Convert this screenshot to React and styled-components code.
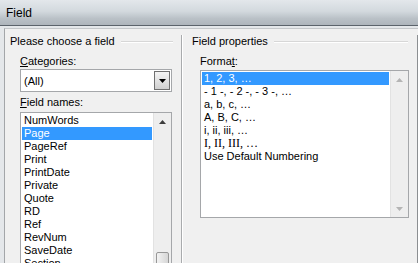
import React from 'react'
import styled, { createGlobalStyle } from 'styled-components'

const fieldNames = [
  'NumWords',
  'Page',
  'PageRef',
  'Print',
  'PrintDate',
  'Private',
  'Quote',
  'RD',
  'Ref',
  'RevNum',
  'SaveDate',
  'Section',
]

const formats = [
  { label: '1, 2, 3, …' },
  { label: '- 1 -, - 2 -, - 3 -, …' },
  { label: 'a, b, c, …' },
  { label: 'A, B, C, …' },
  { label: 'i, ii, iii, …' },
  { label: 'I, II, III, …', serif: true },
  { label: 'Use Default Numbering' },
]

const Arrow = ({ down, color }) => (
  <svg width='7' height='4' viewBox='0 0 7 4'>
    {down ? (
      <path d='M0 0 H7 L3.5 4 Z' fill={color} />
    ) : (
      <path d='M0 4 H7 L3.5 0 Z' fill={color} />
    )}
  </svg>
)

const App = () => {
  return (
    <>
      <GlobalStyle />
      <Window>
        <TitleBar>Field</TitleBar>
        <Frame>
          <Client>
            <LeftPane>
              <GroupHeader>Please choose a field</GroupHeader>
              <Fields>
                <Label>
                  <u>C</u>ategories:
                </Label>
                <Combo>
                  <ComboText>(All)</ComboText>
                  <DropButton>
                    <Arrow down color='#000' />
                  </DropButton>
                </Combo>
                <Label $gap>
                  <u>F</u>ield names:
                </Label>
                <ListBox $height={170}>
                  <Items>
                    {fieldNames.map((name) => (
                      <Item key={name} $selected={name === 'Page'}>
                        {name}
                      </Item>
                    ))}
                  </Items>
                  <ScrollBar>
                    <ArrowButton>
                      <Arrow color='#3c3c3c' />
                    </ArrowButton>
                    <Thumb style={{ marginTop: 122 }} />
                  </ScrollBar>
                </ListBox>
              </Fields>
            </LeftPane>
            <RightPane>
              <GroupHeader $right>Field properties</GroupHeader>
              <Fields $right>
                <Label>
                  Forma<u>t</u>:
                </Label>
                <ListBox $height={148} $wide>
                  <Items>
                    {formats.map((f, i) => (
                      <Item key={f.label} $selected={i === 0} $serif={f.serif}>
                        {f.label}
                      </Item>
                    ))}
                  </Items>
                  <ScrollBar>
                    <ArrowButton>
                      <Arrow color='#b4b4b4' />
                    </ArrowButton>
                    <Spacer />
                    <ArrowButton>
                      <Arrow down color='#b4b4b4' />
                    </ArrowButton>
                  </ScrollBar>
                </ListBox>
              </Fields>
            </RightPane>
          </Client>
        </Frame>
      </Window>
    </>
  )
}

export default App

const GlobalStyle = createGlobalStyle`
  html, body {
    margin: 0;
    padding: 0;
    width: 418px;
    height: 263px;
    overflow: hidden;
    background: #f0f0f0;
  }
  body {
    font-family: 'Liberation Sans', Arial, sans-serif;
    font-size: 11px;
    color: #000;
  }
  u {
    text-decoration: underline;
    text-underline-offset: 1px;
  }
`

const Window = styled.div`
  width: 418px;
  height: 263px;
  display: flex;
  flex-direction: column;
  overflow: hidden;
`

const TitleBar = styled.div`
  height: 25px;
  flex: none;
  display: flex;
  align-items: center;
  padding-left: 6px;
  font-size: 12px;
  background: linear-gradient(
    to bottom,
    #e3e7eb 0%,
    #d3d9de 45%,
    #b9c0c6 75%,
    #aeb5bc 100%
  );
  border-bottom: 1px solid #5b636b;
`

const Frame = styled.div`
  flex: 1;
  display: flex;
  padding: 2px 0 0 4px;
  background: #e4e7ea;
  min-height: 0;
`

const Client = styled.div`
  flex: 1;
  display: flex;
  background: #f0f0f0;
  border-top: 1px solid #c4c7ca;
  border-left: 1px solid #a3a6a9;
  padding-top: 6px;
  min-height: 0;
`

const LeftPane = styled.div`
  width: 176px;
  flex: none;
  display: flex;
  flex-direction: column;
`

const RightPane = styled.div`
  flex: 1;
  display: flex;
  flex-direction: column;
  border-left: 1px solid #a9abad;
  border-right: 1px solid #8c8f92;
  box-shadow: inset 1px 0 0 #fff;
`

const GroupHeader = styled.div`
  height: 13px;
  line-height: 13px;
  display: flex;
  align-items: center;
  gap: 6px;
  padding: 0 ${(p) => (p.$right ? '9px' : '8px')} 0
    ${(p) => (p.$right ? '10px' : '5px')};
  white-space: nowrap;
  &::after {
    content: '';
    flex: 1;
    height: 1px;
    background: #d7d7d7;
    box-shadow: 0 1px 0 #fff;
  }
`

const Fields = styled.div`
  display: flex;
  flex-direction: column;
  padding: 6px ${(p) => (p.$right ? '8px' : '9px')} 0
    ${(p) => (p.$right ? '18px' : '15px')};
`

const Label = styled.div`
  height: 14px;
  line-height: 14px;
  margin: ${(p) => (p.$gap ? '3px' : '0')} 0 ${(p) => (p.$gap ? '3px' : '1px')};
`

const Combo = styled.div`
  height: 21px;
  display: flex;
  align-items: center;
  background: #fff;
  border: 1px solid #a5a7aa;
`

const ComboText = styled.div`
  flex: 1;
  padding-left: 3px;
`

const DropButton = styled.div`
  width: 14px;
  height: 17px;
  margin-right: 1px;
  display: flex;
  align-items: center;
  justify-content: center;
  border: 1px solid #707070;
  background: linear-gradient(to bottom, #f4f4f4, #e3e3e3 50%, #d0d0d0);
`

const ListBox = styled.div`
  height: ${(p) => p.$height}px;
  box-sizing: border-box;
  margin-top: ${(p) => (p.$wide ? '1px' : '0')};
  display: flex;
  background: #fff;
  border: 1px solid #a5a7aa;
  flex: none;
`

const Items = styled.div`
  flex: 1;
  padding: 1px;
  overflow: hidden;
`

const Item = styled.div`
  height: 13px;
  line-height: 13px;
  padding-left: 2px;
  white-space: nowrap;
  font-family: ${(p) =>
    p.$serif ? "'Liberation Serif', 'Times New Roman', serif" : 'inherit'};
  font-size: ${(p) => (p.$serif ? '12px' : '11px')};
  background: ${(p) => (p.$selected ? '#3399ff' : 'transparent')};
  color: ${(p) => (p.$selected ? '#fff' : '#000')};
`

const ScrollBar = styled.div`
  width: 17px;
  flex: none;
  display: flex;
  flex-direction: column;
  background: #eeeeee;
  border-left: 1px solid #e2e2e2;
`

const ArrowButton = styled.div`
  height: 17px;
  flex: none;
  display: flex;
  align-items: center;
  justify-content: center;
`

const Spacer = styled.div`
  flex: 1;
`

const Thumb = styled.div`
  height: 40px;
  margin: 0 2px;
  border: 1px solid #979797;
  border-radius: 2px;
  background: linear-gradient(to right, #f3f3f3, #e4e4e4 50%, #d6d6d6);
`
